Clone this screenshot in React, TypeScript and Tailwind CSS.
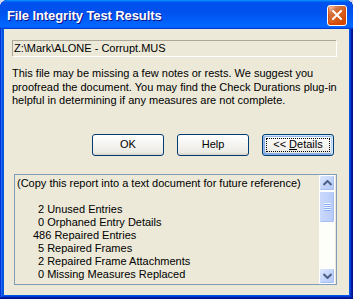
import React from "react";

function Chevron({ up }: { up?: boolean }) {
  return (
    <svg width="9" height="6" viewBox="0 0 9 6" className="block">
      {up ? (
        <path d="M0.5 5 L4.5 1 L8.5 5" fill="none" stroke="#4d6185" strokeWidth="2" />
      ) : (
        <path d="M0.5 1 L4.5 5 L8.5 1" fill="none" stroke="#4d6185" strokeWidth="2" />
      )}
    </svg>
  );
}

function ScrollBtn({ up }: { up?: boolean }) {
  return (
    <div className="h-[16px] w-full rounded-[2px] border border-white bg-[linear-gradient(135deg,#dce7fd,#c1d3fb_60%,#b4c8f6)] shadow-[inset_-1px_-1px_#a8bdf0] flex items-center justify-center">
      <Chevron up={up} />
    </div>
  );
}

function XPButton({ children, def }: { children: React.ReactNode; def?: boolean }) {
  return (
    <div
      className={
        "relative w-[72px] h-[22px] rounded-[3px] border border-[#003c74] bg-[linear-gradient(180deg,#ffffff,#ecebe5_86%,#d8d0c4)] flex items-center justify-center text-[11px] text-black " +
        (def
          ? "shadow-[inset_-1px_1px_#cee7ff,inset_1px_2px_#98b8ea,inset_-2px_2px_#bcd4f6,inset_1px_-1px_#89ade4,inset_2px_-2px_#89ade4]"
          : "")
      }
    >
      {def && (
        <div className="absolute left-[3px] top-[3px] right-[3px] bottom-[3px] border border-dotted border-black" />
      )}
      {children}
    </div>
  );
}

export default function App() {
  return (
    <div className="w-[353px] h-[299px] bg-[#d4dbe8] font-['Liberation_Sans',Arial,sans-serif]">
      <div className="w-full h-full flex flex-col rounded-t-[8px] overflow-hidden bg-[#0054e3] shadow-[inset_-1px_-1px_#00138c,inset_1px_1px_#0831d9,inset_-2px_-2px_#001ea0,inset_2px_2px_#166aee,inset_-3px_-3px_#003bda,inset_3px_3px_#0855dd]">
        {/* Title bar */}
        <div className="h-[29px] shrink-0 flex items-center justify-between pl-[7px] pr-[6px] bg-[linear-gradient(180deg,#0997ff,#0053ee_8%,#0050ee_40%,#06f_88%,#06f_93%,#005bff_95%,#003dd7_96%,#003dd7)]">
          <span className="text-white font-bold text-[13px] pt-[3px] [text-shadow:1px_1px_#0f1089] tracking-[-0.1px]">
            File Integrity Test Results
          </span>
          <div className="w-[20px] h-[21px] mt-[1px] rounded-[3px] border border-white bg-[radial-gradient(circle_at_90%_90%,#cc4600_0,#dc6527_55%,#cd7546_70%,#ffccb2_90%,#fff_100%)] shadow-[inset_0_-1px_2px_1px_#da4600] flex items-center justify-center">
            <svg width="10" height="10" viewBox="0 0 10 10">
              <path d="M1 1 L9 9 M9 1 L1 9" stroke="white" strokeWidth="2" strokeLinecap="square" />
            </svg>
          </div>
        </div>
        {/* Client */}
        <div className="flex-1 ml-[4px] mr-[4px] mb-[4px] bg-[#ece9d8] flex flex-col text-[11px] text-black">
          <div className="mt-[11px] ml-[8px] w-[324px] h-[16px] border-t border-l border-[#aca899] shadow-[1px_1px_#ffffff] flex items-center pl-[1px] leading-[13px]">
            Z:\Mark\ALONE - Corrupt.MUS
          </div>
          <div className="mt-[11px] ml-[8px] leading-[13.5px]">
            This file may be missing a few notes or rests. We suggest you
            <br />
            proofread the document. You may find the Check Durations plug-in
            <br />
            helpful in determining if any measures are not complete.
          </div>
          <div className="mt-[26px] ml-[88px] flex gap-[13px]">
            <XPButton>OK</XPButton>
            <XPButton>Help</XPButton>
            <XPButton def>
              &lt;&lt; <span className="underline ml-[3px]">D</span>etails
            </XPButton>
          </div>
          <div className="mt-[18px] ml-[10px] w-[323px] h-[111px] border border-[#7f9db9] flex">
            <div className="flex-1 pl-[2px] pt-[2px] leading-[13px] whitespace-pre">
              <div>(Copy this report into a text document for future reference)</div>
              <div className="h-[13px]" />
              <div className="pl-[21px]">2 Unused Entries</div>
              <div className="pl-[21px]">0 Orphaned Entry Details</div>
              <div className="pl-[16px]">486 Repaired Entries</div>
              <div className="pl-[21px]">5 Repaired Frames</div>
              <div className="pl-[21px]">2 Repaired Frame Attachments</div>
              <div className="pl-[21px]">0 Missing Measures Replaced</div>
            </div>
            <div className="w-[16px] mr-[1px] bg-[#fdfdfa] flex flex-col">
              <ScrollBtn up />
              <div className="h-[32px] rounded-[2px] border border-white bg-[linear-gradient(90deg,#c9d8fc,#c1d3fb_50%,#b6caf8)] shadow-[inset_-1px_-1px_#a8bdf0] flex flex-col items-center justify-center gap-[1px]">
                <div className="w-[7px] h-[1px] bg-[#eef4fe] shadow-[0_1px_#8cb0f8]" />
                <div className="w-[7px] h-[1px] bg-[#eef4fe] shadow-[0_1px_#8cb0f8]" />
                <div className="w-[7px] h-[1px] bg-[#eef4fe] shadow-[0_1px_#8cb0f8]" />
                <div className="w-[7px] h-[1px] bg-[#eef4fe] shadow-[0_1px_#8cb0f8]" />
              </div>
              <div className="flex-1" />
              <ScrollBtn />
            </div>
          </div>
        </div>
      </div>
    </div>
  );
}
